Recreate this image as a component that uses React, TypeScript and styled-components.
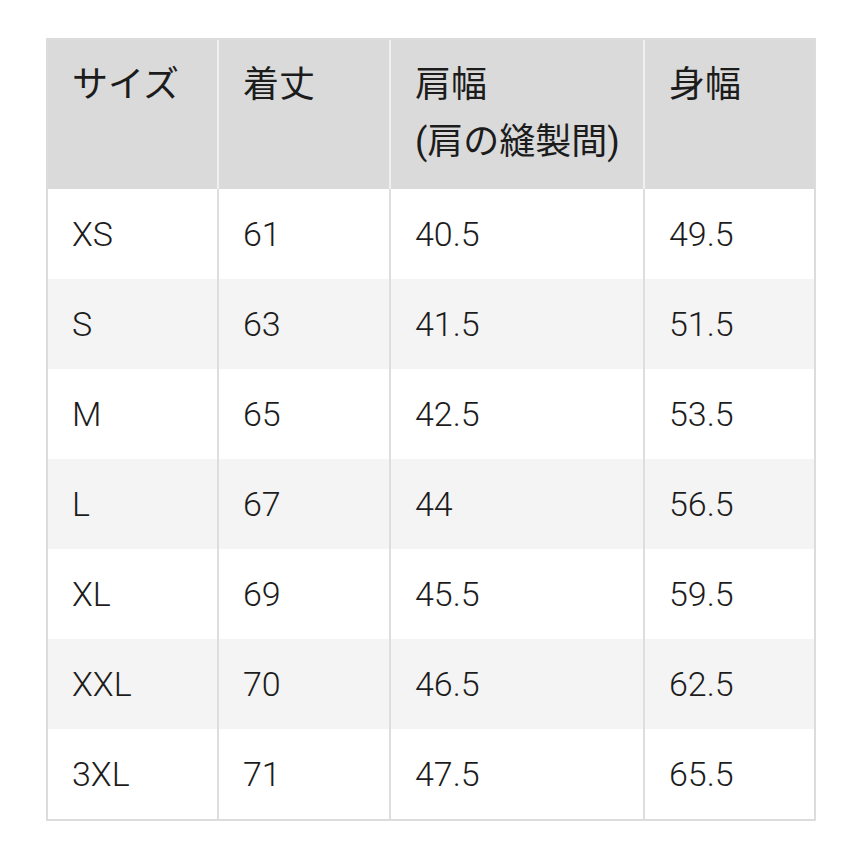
import styled, { createGlobalStyle } from "styled-components";

const GlobalStyle = createGlobalStyle`
  html, body {
    margin: 0;
    padding: 0;
    background: #ffffff;
  }
  body {
    font-family: Roboto, "Noto Sans CJK JP", sans-serif;
    font-weight: 300;
    color: #1c1c1c;
  }
`;

const COLUMNS = "171px 172px 254px 169px";

const Page = styled.div`
  padding: 38px 0 0 46px;
`;

const Table = styled.div`
  width: 770px;
  box-sizing: border-box;
  border: 2px solid #dcdcdc;
`;

const Row = styled.div<{ $striped?: boolean }>`
  display: grid;
  grid-template-columns: ${COLUMNS};
  height: 90px;
  background: ${({ $striped }) => ($striped ? "#f4f4f4" : "#ffffff")};
`;

const HeadRow = styled.div`
  display: grid;
  grid-template-columns: ${COLUMNS};
  height: 149px;
  background: #dadada;
`;

const HeadCell = styled.div`
  box-sizing: border-box;
  padding: 17px 16px 0 24px;
  font-size: 36px;
  line-height: 57px;
  font-weight: 400;
  border-right: 2px solid #f0f0f0;

  &:last-child {
    border-right: none;
  }
`;

const Cell = styled.div`
  box-sizing: border-box;
  display: flex;
  align-items: center;
  padding: 0 24px;
  font-size: 34px;
  font-weight: 300;
  border-right: 2px solid #dedede;

  &:last-child {
    border-right: none;
  }
`;

const rows: string[][] = [
  ["XS", "61", "40.5", "49.5"],
  ["S", "63", "41.5", "51.5"],
  ["M", "65", "42.5", "53.5"],
  ["L", "67", "44", "56.5"],
  ["XL", "69", "45.5", "59.5"],
  ["XXL", "70", "46.5", "62.5"],
  ["3XL", "71", "47.5", "65.5"],
];

const App = () => {
  return (
    <Page>
      <GlobalStyle />
      <Table>
        <HeadRow>
          <HeadCell>サイズ</HeadCell>
          <HeadCell>着丈</HeadCell>
          <HeadCell>
            肩幅
            <br />
            (肩の縫製間)
          </HeadCell>
          <HeadCell>身幅</HeadCell>
        </HeadRow>
        {rows.map((row, i) => (
          <Row key={row[0]} $striped={i % 2 === 1}>
            {row.map((value, j) => (
              <Cell key={j}>{value}</Cell>
            ))}
          </Row>
        ))}
      </Table>
    </Page>
  );
};

export default App;
